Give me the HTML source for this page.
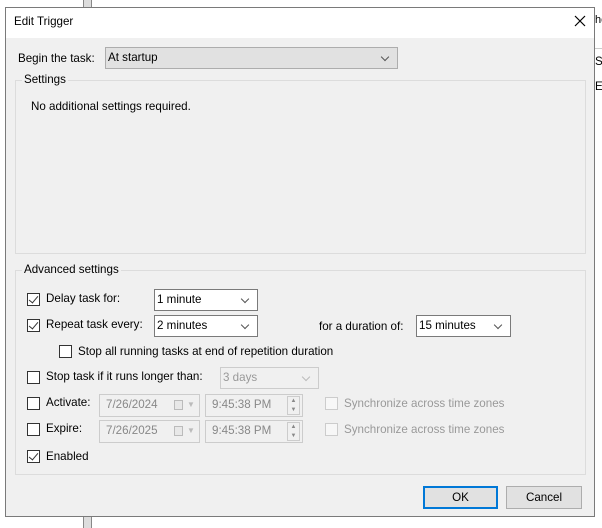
<!DOCTYPE html>
<html><head><style>
*{box-sizing:border-box;margin:0;padding:0}
body{width:602px;height:528px;background:#fff;position:relative;overflow:hidden;font-family:"Liberation Sans",sans-serif;font-size:11.6px;color:#000}
.a{position:absolute}
.t{position:absolute;white-space:nowrap;line-height:14px}
.cb{position:absolute;width:13px;height:13px;border:1px solid #333;background:#fff}
.cb.d{border-color:#ccc;background:#f7f7f7}
.chk::after{content:"";position:absolute;left:3px;top:0px;width:4px;height:8px;border:solid #333;border-width:0 1px 1px 0;transform:rotate(40deg)}
.combo{position:absolute;border:1px solid #7a7a7a;background:#fff;padding-left:2px;line-height:19px}
.combo::after{content:"";position:absolute;right:9px;top:6px;width:5px;height:5px;border:solid #555;border-width:0 1px 1px 0;transform:rotate(45deg)}
.combo.dis{border-color:#ccc;color:#999;background:#f0f0f0}
.combo.dis::after{border-color:#bbb}
.fld{position:absolute;border:1px solid #ccc;background:#f0f0f0;color:#888;line-height:20px;padding-left:6px}
.grp{position:absolute;border:1px solid #dcdcdc}
.gl{position:absolute;background:#f0f0f0;padding:0 2px;line-height:14px}
.dis{color:#999}
.btn{position:absolute;border:1px solid #adadad;background:#e1e1e1;text-align:center;line-height:19px}
</style></head><body>
<div class="a" style="left:83px;top:0;width:9px;height:8px;background:#ddd;border-left:1px solid #888;border-right:1px solid #888"></div>
<div class="a" style="left:83px;top:517px;width:9px;height:11px;background:#ddd;border-left:1px solid #888;border-right:1px solid #888"></div>
<div class="a" style="left:594px;top:48px;width:8px;height:1px;background:#ccc"></div>
<div class="t" style="left:595px;top:13px;font-size:11px">he</div>
<div class="t" style="left:595px;top:55px">St</div>
<div class="t" style="left:595px;top:80px">Er</div>
<div class="a" style="left:5px;top:7px;width:590px;height:510px;border:1px solid #7a7a7a;background:#f0f0f0"></div>
<div class="a" style="left:6px;top:8px;width:588px;height:30px;background:#fff"></div>
<div class="t" style="left:14px;top:15px">Edit Trigger</div>
<svg class="a" style="left:574px;top:15px" width="12" height="12"><path d="M1 1L11 11M11 1L1 11" stroke="#000" stroke-width="1.2"/></svg>
<div class="t" style="left:18px;top:52px">Begin the task:</div>
<div class="combo" style="left:105px;top:47px;width:293px;height:22px;background:#e1e1e1;border-color:#adadad">At startup</div>
<div class="grp" style="left:15px;top:80px;width:571px;height:174px"></div>
<div class="gl" style="left:22px;top:73px">Settings</div>
<div class="t" style="left:31px;top:100px">No additional settings required.</div>
<div class="grp" style="left:15px;top:270px;width:571px;height:205px"></div>
<div class="gl" style="left:22px;top:263px">Advanced settings</div>
<div class="cb chk" style="left:27px;top:293px"></div><div class="t" style="left:46px;top:292px">Delay task for:</div>
<div class="combo" style="left:154px;top:289px;width:104px;height:22px">1 minute</div>
<div class="cb chk" style="left:27px;top:319px"></div><div class="t" style="left:46px;top:318px">Repeat task every:</div>
<div class="combo" style="left:154px;top:315px;width:104px;height:22px">2 minutes</div>
<div class="t" style="left:319px;top:320px">for a duration of:</div>
<div class="combo" style="left:416px;top:315px;width:95px;height:22px">15 minutes</div>
<div class="cb" style="left:59px;top:345px"></div><div class="t" style="left:78px;top:345px">Stop all running tasks at end of repetition duration</div>
<div class="cb" style="left:27px;top:371px"></div><div class="t" style="left:46px;top:370px">Stop task if it runs longer than:</div>
<div class="combo dis" style="left:220px;top:367px;width:99px;height:22px">3 days</div>
<div class="cb" style="left:27px;top:397px"></div><div class="t" style="left:46px;top:396px">Activate:</div>
<div class="fld" style="left:99px;top:394px;width:101px;height:23px">7/26/2024<span style="position:absolute;left:74px;top:5px;width:9px;height:10px;border:1px solid #bbb;background:#e8e8e8"></span><span style="position:absolute;left:87px;top:0;color:#bbb;font-size:8px">▼</span></div>
<div class="fld" style="left:205px;top:394px;width:98px;height:23px">9:45:38 PM<span style="position:absolute;right:2px;top:1px;width:13px;height:19px;border:1px solid #ccc;font-size:6px;line-height:9px;text-align:center;color:#888">▲<br>▼</span></div>
<div class="cb d" style="left:325px;top:397px"></div><div class="t dis" style="left:344px;top:397px">Synchronize across time zones</div>
<div class="cb" style="left:27px;top:423px"></div><div class="t" style="left:46px;top:422px">Expire:</div>
<div class="fld" style="left:99px;top:420px;width:101px;height:23px">7/26/2025<span style="position:absolute;left:74px;top:5px;width:9px;height:10px;border:1px solid #bbb;background:#e8e8e8"></span><span style="position:absolute;left:87px;top:0;color:#bbb;font-size:8px">▼</span></div>
<div class="fld" style="left:205px;top:420px;width:98px;height:23px">9:45:38 PM<span style="position:absolute;right:2px;top:1px;width:13px;height:19px;border:1px solid #ccc;font-size:6px;line-height:9px;text-align:center;color:#888">▲<br>▼</span></div>
<div class="cb d" style="left:325px;top:423px"></div><div class="t dis" style="left:344px;top:423px">Synchronize across time zones</div>
<div class="cb chk" style="left:27px;top:450px"></div><div class="t" style="left:46px;top:450px">Enabled</div>
<div class="btn" style="left:423px;top:486px;width:75px;height:23px;border:2px solid #0078d7">OK</div>
<div class="btn" style="left:506px;top:486px;width:76px;height:23px;line-height:21px">Cancel</div>
</body></html>
